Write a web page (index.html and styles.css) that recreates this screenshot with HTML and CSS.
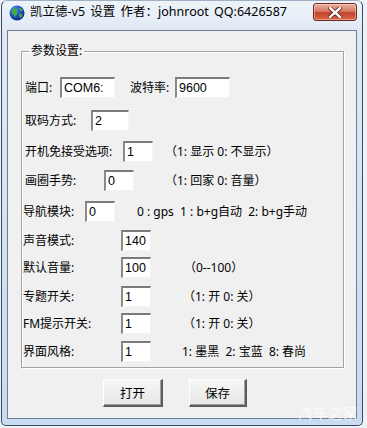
FILE: index.html
```html
<!DOCTYPE html>
<html lang="zh">
  <head>
    <meta charset="utf-8">
    <title>凯立德-v5 设置</title>
    <link rel="stylesheet" href="styles.css">
  </head>
  <body>
    <div class="window">
      <div class="titlebar">
        <svg class="app-icon" width="16" height="16" viewBox="0 0 16 16">
          <defs>
            <radialGradient id="sea" cx="0.35" cy="0.3" r="0.8">
              <stop offset="0" stop-color="#5b8ff0"/>
              <stop offset="0.6" stop-color="#1c47b8"/>
              <stop offset="1" stop-color="#0b2170"/>
            </radialGradient>
          </defs>
          <circle cx="8" cy="8" r="7.5" fill="url(#sea)"/>
          <path d="M3 4.5 L6 3 L8 4 L7 6 L8.5 7.5 L7.5 10 L6 12.5 L5 10 L3.5 8.5 L2.5 6 Z" fill="#3fae3a"/>
          <path d="M9.5 2.5 L12.5 3.5 L14 6 L12 6.5 L10.5 5 Z" fill="#3fae3a"/>
          <path d="M10.5 9 L13.5 8.5 L13 12 L11 13 L10 11 Z" fill="#3fae3a"/>
        </svg>
        <span class="title">凯立德-v5 设置 作者：johnroot QQ:6426587</span>
        <div class="close-btn">
          <svg width="14" height="11" viewBox="0 0 14 11">
            <path d="M2 1 L12 10 M12 1 L2 10" stroke="#5a1a10" stroke-width="4" stroke-linecap="square"/>
            <path d="M2 1 L12 10 M12 1 L2 10" stroke="#ffffff" stroke-width="2.4" stroke-linecap="square"/>
          </svg>
        </div>
      </div>

      <div class="client">
        <fieldset class="group">
          <legend>参数设置:</legend>

          <div class="row row-port">
            <span class="label w-port">端口:</span>
            <input class="field w55" value="COM6:">
            <span class="label w-baud">波特率:</span>
            <input class="field w55" value="9600">
          </div>

          <div class="row row-code">
            <span class="label w-code">取码方式:</span>
            <input class="field w38" value="2">
          </div>

          <div class="row row-boot">
            <span class="label w-boot">开机免接受选项:</span>
            <input class="field w30" value="1">
            <span class="note n-boot">（1: 显示 0: 不显示）</span>
          </div>

          <div class="row row-circle">
            <span class="label w-circle">画圈手势:</span>
            <input class="field w30" value="0">
            <span class="note n-circle">（1: 回家 0: 音量）</span>
          </div>

          <div class="row row-nav">
            <span class="label w-nav">导航模块:</span>
            <input class="field w30" value="0">
            <span class="note n-nav">0 : gps  1 : b+g自动  2: b+g手动</span>
          </div>

          <div class="row row-sound">
            <span class="label w-long">声音模式:</span>
            <input class="field w30" value="140">
          </div>

          <div class="row row-volume">
            <span class="label w-long">默认音量:</span>
            <input class="field w30" value="100">
            <span class="note n-volume">（0--100）</span>
          </div>

          <div class="row row-topic">
            <span class="label w-long">专题开关:</span>
            <input class="field w30" value="1">
            <span class="note n-switch">（1: 开 0: 关）</span>
          </div>

          <div class="row row-fm">
            <span class="label w-long">FM提示开关:</span>
            <input class="field w30" value="1">
            <span class="note n-switch">（1: 开 0: 关）</span>
          </div>

          <div class="row row-skin">
            <span class="label w-long">界面风格:</span>
            <input class="field w30" value="1">
            <span class="note n-skin">1: 墨黑  2: 宝蓝  8: 春尚</span>
          </div>
        </fieldset>

        <div class="buttons">
          <button class="btn btn-open">打开</button>
          <button class="btn btn-save">保存</button>
        </div>
      </div>

      <div class="watermark">汽车之家</div>
    </div>
  </body>
</html>
```

FILE: styles.css
```css
html {
  font-family: "Noto Sans", "Noto Sans CJK SC", sans-serif;
}

body {
  margin: 0;
  background-color: #eef1f5;
}

.window {
  position: relative;
  box-sizing: border-box;
  width: 362px;
  height: 426px;
  margin-left: 1px;
  padding: 0 5px 6px 5px;
  border: 1px solid #3b4c62;
  border-top-color: #9fb0c4;
  border-radius: 6px 6px 5px 5px;
  background: linear-gradient(to bottom, #eef3f9 0, #dfe9f5 30px, #c8dbf0 100%);
  display: flex;
  flex-direction: column;
}

.titlebar {
  height: 29px;
  display: flex;
  align-items: flex-start;
}

.app-icon {
  margin: 4px 0 0 2px;
}

.title {
  margin: 3px 0 0 5px;
  font-size: 12.5px;
  line-height: 16px;
  word-spacing: 2px;
  color: #000;
  white-space: pre;
}

.close-btn {
  box-sizing: border-box;
  margin: 2px 0 0 auto;
  width: 44px;
  height: 18px;
  border: 1px solid #6b2c22;
  border-radius: 3px;
  background: linear-gradient(to bottom, #eab0a2 0, #d77a63 45%, #c2422a 55%, #d9694a 100%);
  box-shadow: inset 0 0 0 1px rgba(255, 255, 255, 0.35);
  display: flex;
  align-items: center;
  justify-content: center;
}

.client {
  flex: 1;
  border: 1px solid #6d7f94;
  background-color: #f0f0f0;
  display: flex;
  flex-direction: column;
  font-size: 12px;
  color: #000;
}

.group {
  box-sizing: border-box;
  width: 323px;
  margin: 12px 0 0 13px;
  padding: 0 0 5px 0;
  border: 1px solid #a3a3a3;
  box-shadow: 1px 1px 0 #ffffff, inset 1px 1px 0 #ffffff;
}

.group legend {
  margin-left: 7px;
  padding: 0 2px;
  font-size: 12px;
  line-height: 16px;
}

.row {
  display: flex;
  align-items: center;
  height: 21px;
  white-space: pre;
}

.row-port { margin: 18px 0 0 3px; }
.row-code { margin: 12px 0 0 3px; }
.row-boot { margin: 10px 0 0 3px; }
.row-circle { margin: 8px 0 0 3px; }
.row-nav { margin: 10px 0 0 1px; }
.row-sound { margin: 8px 0 0 1px; }
.row-volume { margin: 6px 0 0 1px; }
.row-topic { margin: 8px 0 0 1px; }
.row-fm { margin: 6px 0 0 1px; }
.row-skin { margin: 7px 0 0 1px; }

.label {
  flex: none;
  line-height: 16px;
}

.w-port { width: 35px; }
.w-baud { width: 45px; margin-left: 15px; }
.w-code { width: 66px; }
.w-boot { width: 98px; }
.w-circle { width: 79px; }
.w-nav { width: 62px; }
.w-long { width: 98px; }

.field {
  box-sizing: border-box;
  height: 21px;
  margin: 0;
  padding: 0 0 0 2px;
  border-style: solid;
  border-width: 2px 1px 1px 2px;
  border-color: #7a7a7a #f4f4f4 #f4f4f4 #8a8a8a;
  background-color: #ffffff;
  font-family: "Liberation Sans", "Noto Sans CJK SC", sans-serif;
  font-size: 12.5px;
  color: #000;
}

.w55 { width: 55px; }
.w38 { width: 38px; }
.w30 { width: 30px; }

.note {
  line-height: 16px;
}

.n-boot { margin-left: 12px; }
.n-circle { margin-left: 31px; }
.n-nav { margin-left: 22px; }
.n-volume { margin-left: 33px; }
.n-switch { margin-left: 32px; }
.n-skin { margin-left: 31px; }

.buttons {
  display: flex;
  column-gap: 26px;
  margin: 11px 0 0 95px;
}

.btn {
  box-sizing: border-box;
  width: 60px;
  height: 28px;
  margin: 0;
  padding: 0;
  border-style: solid;
  border-width: 1px 2px 2px 1px;
  border-color: #ffffff #5c5c5c #5c5c5c #ffffff;
  background: linear-gradient(to bottom, #f7f7f7, #e6e6e6);
  box-shadow: inset -1px -1px 0 #a0a0a0;
  font-family: "Noto Sans CJK SC", sans-serif;
  font-size: 12.5px;
  color: #000;
}

.btn-save {
  width: 58px;
}

.watermark {
  position: absolute;
  right: 4px;
  bottom: 3px;
  font-size: 14px;
  letter-spacing: 1px;
  color: rgba(255, 255, 255, 0.75);
  font-family: "Noto Sans CJK SC", sans-serif;
}
```
